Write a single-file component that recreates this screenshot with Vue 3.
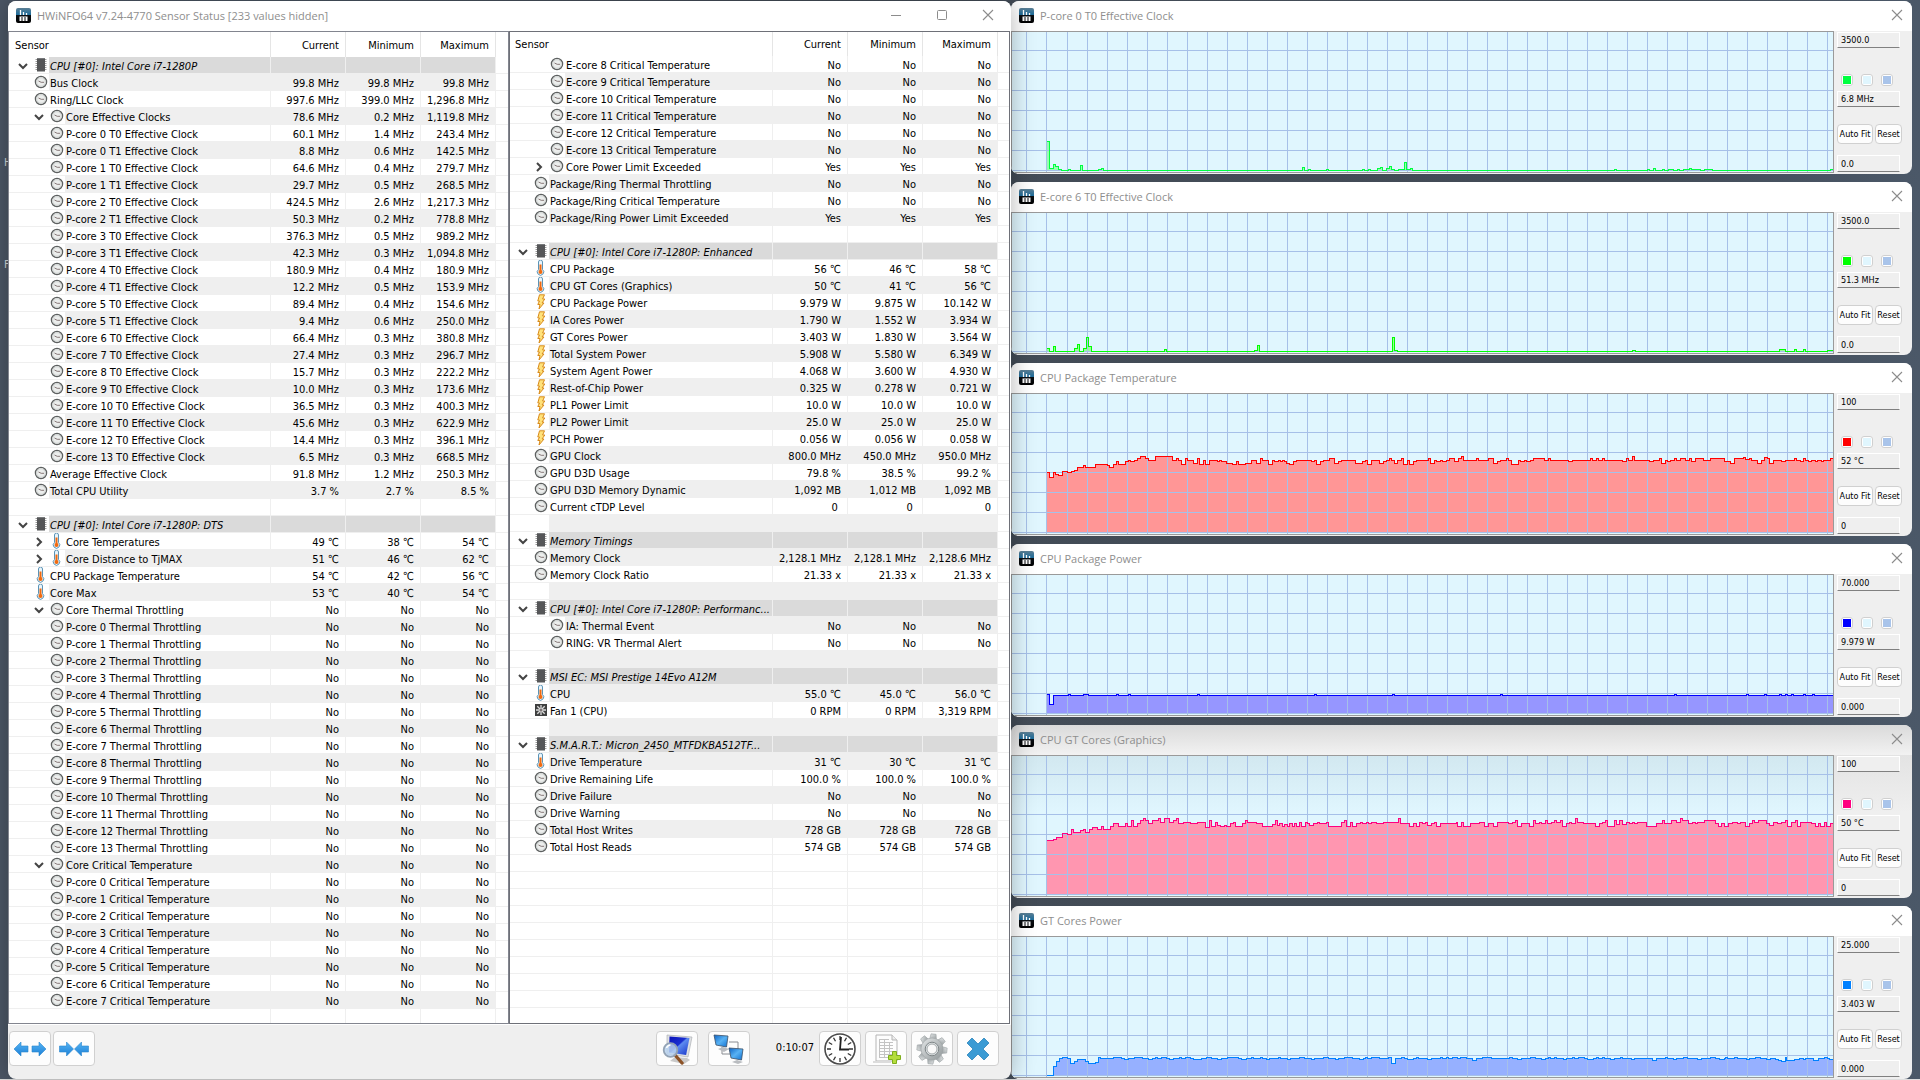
<script setup>
// Row format: kind + indent level | label | current | minimum | maximum
// kinds: h = group header, c = clock, t = temperature, p = power, f = fan
// a trailing v or > after the level marks an expanded or collapsed branch
const parse = (text) =>
  text.trim().split('\n').map((line) => {
    const [key, label = '', ...values] = line.trim().split('|')
    if (key === '-') return { kind: 'blank', level: 1, label: '', values: ['', '', ''] }
    return {
      kind: key[0],
      level: Number(key[1]),
      open: key[2] || '',
      label,
      values: values.length === 3 ? values : values.length === 1 ? [values[0], values[0], values[0]] : ['', '', '']
    }
  })

const filler = (n) => Array.from({ length: n }, () => ({ kind: 'empty', level: 1, label: '', values: ['', '', ''] }))

const leftRows = [
  ...parse(`
h1v|CPU [#0]: Intel Core i7-1280P
c1|Bus Clock|99.8 MHz
c1|Ring/LLC Clock|997.6 MHz|399.0 MHz|1,296.8 MHz
c2v|Core Effective Clocks|78.6 MHz|0.2 MHz|1,119.8 MHz
c2|P-core 0 T0 Effective Clock|60.1 MHz|1.4 MHz|243.4 MHz
c2|P-core 0 T1 Effective Clock|8.8 MHz|0.6 MHz|142.5 MHz
c2|P-core 1 T0 Effective Clock|64.6 MHz|0.4 MHz|279.7 MHz
c2|P-core 1 T1 Effective Clock|29.7 MHz|0.5 MHz|268.5 MHz
c2|P-core 2 T0 Effective Clock|424.5 MHz|2.6 MHz|1,217.3 MHz
c2|P-core 2 T1 Effective Clock|50.3 MHz|0.2 MHz|778.8 MHz
c2|P-core 3 T0 Effective Clock|376.3 MHz|0.5 MHz|989.2 MHz
c2|P-core 3 T1 Effective Clock|42.3 MHz|0.3 MHz|1,094.8 MHz
c2|P-core 4 T0 Effective Clock|180.9 MHz|0.4 MHz|180.9 MHz
c2|P-core 4 T1 Effective Clock|12.2 MHz|0.5 MHz|153.9 MHz
c2|P-core 5 T0 Effective Clock|89.4 MHz|0.4 MHz|154.6 MHz
c2|P-core 5 T1 Effective Clock|9.4 MHz|0.6 MHz|250.0 MHz
c2|E-core 6 T0 Effective Clock|66.4 MHz|0.3 MHz|380.8 MHz
c2|E-core 7 T0 Effective Clock|27.4 MHz|0.3 MHz|296.7 MHz
c2|E-core 8 T0 Effective Clock|15.7 MHz|0.3 MHz|222.2 MHz
c2|E-core 9 T0 Effective Clock|10.0 MHz|0.3 MHz|173.6 MHz
c2|E-core 10 T0 Effective Clock|36.5 MHz|0.3 MHz|400.3 MHz
c2|E-core 11 T0 Effective Clock|45.6 MHz|0.3 MHz|622.9 MHz
c2|E-core 12 T0 Effective Clock|14.4 MHz|0.3 MHz|396.1 MHz
c2|E-core 13 T0 Effective Clock|6.5 MHz|0.3 MHz|668.5 MHz
c1|Average Effective Clock|91.8 MHz|1.2 MHz|250.3 MHz
c1|Total CPU Utility|3.7 %|2.7 %|8.5 %
-
h1v|CPU [#0]: Intel Core i7-1280P: DTS
t2>|Core Temperatures|49 ℃|38 ℃|54 ℃
t2>|Core Distance to TjMAX|51 ℃|46 ℃|62 ℃
t1|CPU Package Temperature|54 ℃|42 ℃|56 ℃
t1|Core Max|53 ℃|40 ℃|54 ℃
c2v|Core Thermal Throttling|No
c2|P-core 0 Thermal Throttling|No
c2|P-core 1 Thermal Throttling|No
c2|P-core 2 Thermal Throttling|No
c2|P-core 3 Thermal Throttling|No
c2|P-core 4 Thermal Throttling|No
c2|P-core 5 Thermal Throttling|No
c2|E-core 6 Thermal Throttling|No
c2|E-core 7 Thermal Throttling|No
c2|E-core 8 Thermal Throttling|No
c2|E-core 9 Thermal Throttling|No
c2|E-core 10 Thermal Throttling|No
c2|E-core 11 Thermal Throttling|No
c2|E-core 12 Thermal Throttling|No
c2|E-core 13 Thermal Throttling|No
c2v|Core Critical Temperature|No
c2|P-core 0 Critical Temperature|No
c2|P-core 1 Critical Temperature|No
c2|P-core 2 Critical Temperature|No
c2|P-core 3 Critical Temperature|No
c2|P-core 4 Critical Temperature|No
c2|P-core 5 Critical Temperature|No
c2|E-core 6 Critical Temperature|No
c2|E-core 7 Critical Temperature|No`),
  ...filler(1)
]

const rightRows = [
  ...parse(`
c2|E-core 8 Critical Temperature|No
c2|E-core 9 Critical Temperature|No
c2|E-core 10 Critical Temperature|No
c2|E-core 11 Critical Temperature|No
c2|E-core 12 Critical Temperature|No
c2|E-core 13 Critical Temperature|No
c2>|Core Power Limit Exceeded|Yes
c1|Package/Ring Thermal Throttling|No
c1|Package/Ring Critical Temperature|No
c1|Package/Ring Power Limit Exceeded|Yes
-
h1v|CPU [#0]: Intel Core i7-1280P: Enhanced
t1|CPU Package|56 ℃|46 ℃|58 ℃
t1|CPU GT Cores (Graphics)|50 ℃|41 ℃|56 ℃
p1|CPU Package Power|9.979 W|9.875 W|10.142 W
p1|IA Cores Power|1.790 W|1.552 W|3.934 W
p1|GT Cores Power|3.403 W|1.830 W|3.564 W
p1|Total System Power|5.908 W|5.580 W|6.349 W
p1|System Agent Power|4.068 W|3.600 W|4.930 W
p1|Rest-of-Chip Power|0.325 W|0.278 W|0.721 W
p1|PL1 Power Limit|10.0 W|10.0 W|10.0 W
p1|PL2 Power Limit|25.0 W|25.0 W|25.0 W
p1|PCH Power|0.056 W|0.056 W|0.058 W
c1|GPU Clock|800.0 MHz|450.0 MHz|950.0 MHz
c1|GPU D3D Usage|79.8 %|38.5 %|99.2 %
c1|GPU D3D Memory Dynamic|1,092 MB|1,012 MB|1,092 MB
c1|Current cTDP Level|0\u00a0|0\u00a0|0\u00a0
-
h1v|Memory Timings
c1|Memory Clock|2,128.1 MHz|2,128.1 MHz|2,128.6 MHz
c1|Memory Clock Ratio|21.33 x
-
h1v|CPU [#0]: Intel Core i7-1280P: Performanc...
c2|IA: Thermal Event|No
c2|RING: VR Thermal Alert|No
-
h1v|MSI EC: MSI Prestige 14Evo A12M
t1|CPU|55.0 ℃|45.0 ℃|56.0 ℃
f1|Fan 1 (CPU)|0 RPM|0 RPM|3,319 RPM
-
h1v|S.M.A.R.T.: Micron_2450_MTFDKBA512TF...
t1|Drive Temperature|31 ℃|30 ℃|31 ℃
c1|Drive Remaining Life|100.0 %
c1|Drive Failure|No
c1|Drive Warning|No
c1|Total Host Writes|728 GB
c1|Total Host Reads|574 GB`),
  ...filler(10)
]

const panels = [
  { id: 'left', rows: leftRows },
  { id: 'right', rows: rightRows }
]

const iconOf = { h: 'i-chip', c: 'i-clock', t: 'i-temp', p: 'i-power', f: 'i-fan' }

// Graph traces as "x:y" breakpoints of a step line, in plot pixels
const graphs = [
  {
    title: 'P-core 0 T0 Effective Clock', max: '3500.0', now: '6.8 MHz', min: '0.0',
    line: '#00ff40', fill: '#96ffb0',
    trace: '35:109 37:136 41:132 43:134 46:137 49:138 56:137 58:138 68:133 70:138 86:137 89:136 91:138 290:135 292:138 296:137 298:138 314:137 316:138 350:137 352:138 356:137 358:138 365:136 368:135 370:138 374:136 377:134 379:137 382:138 386:137 392:130 394:137 398:136 400:138 602:137 604:138 635:137 637:138 641:136 643:138 650:137 652:138 656:137 661:138 665:137 667:138 671:137 677:136 679:137 688:138 692:137 700:138 818:137'
  },
  {
    title: 'E-core 6 T0 Effective Clock', max: '3500.0', now: '51.3 MHz', min: '0.0',
    line: '#00ff00', fill: '#96ff96',
    trace: '35:135 37:138 41:133 43:138 62:135 65:131 67:138 71:135 74:124 76:133 79:138 152:136 154:138 242:137 245:132 247:138 380:124 382:137 385:138 620:137 623:138 767:136 773:138 782:136 784:138 791:136 793:138 815:137'
  },
  {
    title: 'CPU Package Temperature', max: '100', now: '52 °C', min: '0',
    line: '#ff0000', fill: '#ff9696',
    trace: '35:78 37:83 41:78 43:80 46:81 50:77 55:78 59:77 62:76 65:73 71:71 73:73 83:70 95:71 97:73 101:70 104:67 106:70 113:67 116:66 118:67 122:66 125:64 128:62 133:64 136:66 143:62 160:66 164:64 166:66 169:70 173:64 175:66 181:69 185:64 187:70 191:66 193:70 197:66 205:67 207:66 209:67 214:69 220:70 224:67 226:70 233:69 239:66 244:69 248:64 250:66 256:70 260:66 262:67 266:66 268:67 270:66 272:67 274:69 277:70 281:67 284:66 299:67 302:66 304:70 308:67 311:66 317:64 322:69 326:67 329:66 343:69 350:67 353:66 355:70 359:66 367:69 371:67 374:66 377:64 379:66 382:69 385:66 389:64 391:70 395:66 397:70 401:67 404:66 416:64 418:69 422:66 424:67 428:66 430:67 434:66 437:64 442:67 446:64 449:62 451:66 464:64 466:66 476:64 481:69 485:67 488:66 494:64 496:66 499:70 506:66 508:67 512:66 514:67 518:66 521:64 532:66 536:64 538:66 556:67 560:66 578:64 580:66 584:64 586:66 590:64 592:66 610:67 614:64 616:66 620:62 622:66 637:67 641:66 647:64 649:69 653:66 655:67 658:66 662:64 664:66 668:64 673:66 677:64 679:67 683:64 691:66 698:64 712:67 718:69 722:64 731:63 733:65 737:64 739:66 745:69 749:66 752:63 755:64 757:69 761:66 769:67 773:66 782:64 784:66 788:67 791:64 793:66 796:67 799:66 803:67 805:66 809:67 811:66 818:64'
  },
  {
    title: 'CPU Package Power', max: '70.000', now: '9.979 W', min: '0.000',
    line: '#0000ff', fill: '#9696ff',
    trace: '35:119 37:129 41:120 56:119 58:120 71:119 76:120 104:119 106:120 116:119 118:120 185:119 187:120 302:119 304:120 380:119 382:120 488:119 490:120 662:119 664:120 734:119 736:120 752:119 754:120 767:119 769:120 773:119 775:120 779:119 781:120 791:119 793:120 800:119 802:120'
  },
  {
    title: 'CPU GT Cores (Graphics)', max: '100', now: '50 °C', min: '0', shaded: true,
    line: '#ff0080', fill: '#ff96b0',
    trace: '35:84 41:83 44:81 50:77 55:78 59:73 61:76 68:74 71:73 73:76 77:73 80:71 85:73 89:70 91:73 98:70 101:67 106:70 113:67 115:70 119:64 121:70 125:67 128:64 131:62 133:64 136:67 140:64 146:62 148:66 152:62 157:66 161:64 164:62 166:67 171:66 178:67 185:66 193:71 197:64 199:70 203:66 205:69 208:70 212:69 214:70 218:67 221:66 223:70 230:67 233:64 235:66 244:67 250:70 260:68 263:64 265:69 267:67 270:70 272:68 275:70 277:67 280:70 282:67 284:70 287:66 289:70 293:66 295:67 297:69 301:67 305:66 307:67 314:66 316:70 329:66 332:64 334:70 338:66 340:70 344:67 348:66 350:67 354:66 356:67 359:66 364:67 371:66 386:62 388:67 397:70 401:67 404:70 407:66 410:67 413:66 415:69 419:67 422:66 424:70 428:67 444:66 445:70 449:66 451:70 458:67 467:66 472:70 476:67 481:70 485:66 491:66 496:67 500:66 503:64 505:70 509:67 517:70 521:64 523:67 527:66 529:67 533:64 535:67 539:66 542:64 544:66 548:64 550:70 554:67 557:66 559:67 563:62 565:66 571:67 583:70 587:67 590:66 593:64 595:70 602:64 604:68 607:64 610:68 614:66 617:67 620:66 622:67 625:66 634:70 644:67 650:64 652:67 659:64 664:66 668:62 670:64 676:67 680:66 683:67 685:66 692:64 703:67 706:70 709:67 712:70 716:67 720:66 725:67 728:66 733:70 737:67 740:64 742:66 746:64 754:67 757:69 761:66 765:67 769:66 773:64 775:70 779:66 783:64 785:70 788:66 799:67 803:70 806:67 808:70 812:66 814:70 818:67'
  },
  {
    title: 'GT Cores Power', max: '25.000', now: '3.403 W', min: '0.000',
    line: '#0080ff', fill: '#96b0ff',
    trace: '35:138 41:129 44:124 47:121 50:120 55:121 58:126 62:124 65:122 73:124 76:126 83:125 86:120 88:121 101:120 109:121 112:122 116:121 122:120 130:121 136:122 140:121 143:120 145:121 149:120 154:121 157:122 161:121 167:120 169:121 173:120 178:121 181:122 189:121 194:120 199:121 205:122 209:121 215:120 226:121 229:122 234:121 239:120 241:121 248:120 250:121 254:122 257:121 266:120 268:121 275:122 278:121 287:120 292:121 299:122 302:121 311:120 316:121 323:122 326:121 332:120 340:121 347:122 351:121 353:120 355:121 359:120 367:121 376:120 379:126 383:121 389:120 392:121 395:122 401:121 404:120 406:121 415:122 419:121 428:120 430:121 434:120 436:121 440:120 445:121 448:120 454:121 460:123 464:121 470:120 479:121 497:120 500:121 505:122 509:121 518:120 523:121 529:122 533:121 536:120 538:121 542:120 544:121 551:122 554:121 560:120 562:121 566:120 572:121 575:122 581:121 584:120 586:121 590:120 592:121 598:122 602:121 608:120 610:121 619:122 622:121 640:123 644:121 653:120 655:121 661:122 664:121 671:120 675:121 685:122 689:121 698:120 703:121 707:122 712:121 713:120 715:121 722:120 725:121 734:122 737:121 743:120 748:121 754:122 758:121 763:122 766:123 769:124 773:120 774:123 782:122 787:121 791:122 793:121 801:123 806:121 812:120 815:121 817:122'
  }
].map((g) => {
  const pts = g.trace.split(' ').map((p) => p.split(':').map(Number))
  let d = `M${pts[0][0]} ${pts[0][1] + 0.5}`
  pts.slice(1).forEach(([x, y]) => { d += `H${x + 0.5}V${y + 0.5}` })
  d += 'H821'
  return { ...g, d, area: `${d}V139H${pts[0][0]}Z` }
})

const gridX = [14, 34, ...Array.from({ length: 39 }, (_, i) => 55 + i * 20)]
const gridY = Array.from({ length: 7 }, (_, i) => 18 + i * 20)
const ticks = Array.from({ length: 12 }, (_, i) => i * 30)
const teeth = Array.from({ length: 8 }, (_, i) => i * 45)
</script>

<template>
  <svg class="defs" aria-hidden="true">
    <defs>
      <linearGradient id="g-app" x1="0" y1="0" x2="0" y2="1">
        <stop offset="0" stop-color="#5c7f94" /><stop offset=".45" stop-color="#1d6d9c" />
        <stop offset=".5" stop-color="#0a0f14" /><stop offset="1" stop-color="#000" />
      </linearGradient>
      <linearGradient id="g-arrow" x1="0" y1="0" x2="0" y2="1">
        <stop offset="0" stop-color="#54b4f4" /><stop offset="1" stop-color="#1c7fd6" />
      </linearGradient>
      <linearGradient id="g-screen" x1="0" y1="0" x2="1" y2="1">
        <stop offset="0" stop-color="#0b12b8" /><stop offset=".45" stop-color="#1a2fd0" />
        <stop offset=".5" stop-color="#5e8cf0" /><stop offset="1" stop-color="#1430c8" />
      </linearGradient>
      <linearGradient id="g-net" x1="0" y1="0" x2="1" y2="1">
        <stop offset="0" stop-color="#0c62c4" /><stop offset=".5" stop-color="#58b2f4" /><stop offset="1" stop-color="#0f6fd0" />
      </linearGradient>
      <linearGradient id="g-gear" x1="0" y1="0" x2="1" y2="1">
        <stop offset="0" stop-color="#e4e7e8" /><stop offset="1" stop-color="#8f9698" />
      </linearGradient>
    </defs>
    <symbol id="i-app" viewBox="0 0 15 15">
      <rect width="15" height="15" rx="2" fill="url(#g-app)" />
      <path d="M4.500 2v5M7.500 4v3M10.500 5v2" stroke="#fff" stroke-width="1.300" />
      <path d="M4.500 9v4M7.500 9v4M10.500 9v4" stroke="#fff" stroke-width="2" />
      <path d="M3.500 8.500h8" stroke="#fff" stroke-opacity=".5" />
    </symbol>
    <symbol id="i-clock" viewBox="0 0 14 14">
      <circle cx="7" cy="7" r="5.6" fill="#eceeed" stroke="#5d6060" stroke-width="1.3" />
      <circle cx="7" cy="7" r="4.3" fill="none" stroke="#cfd3d2" />
      <path d="M4.500 6 7.200 7.300H10" fill="none" stroke="#7b6a6a" stroke-width=".9" />
    </symbol>
    <symbol id="i-chip" viewBox="0 0 14 14">
      <path d="M1.500 1.500H12.500M1.500 3.500H12.500M1.500 5.500H12.500M1.500 7.500H12.500M1.500 9.500H12.500M1.500 11.500H12.500" stroke="#9a9a9a" />
      <rect x="3" width="8" height="13.500" fill="#555658" />
      <rect x="3" width="8" height="1" fill="#77797b" />
    </symbol>
    <symbol id="i-temp" viewBox="0 0 14 16">
      <path d="M4.500 2a2 2 0 0 1 4 0v7.500a3.200 3.200 0 1 1-4 0z" fill="#e8f4fb" stroke="#5b93b5" />
      <path d="M6.500 4.500v8" stroke="#f06a10" stroke-width="2" />
      <circle cx="6.500" cy="12" r="2" fill="#f06a10" />
    </symbol>
    <symbol id="i-power" viewBox="0 0 14 16">
      <path d="M5.500.8h5L8.600 5h2.200L8 9h2l-5 6 1-4.500H3.800L5.500 7H3.800z" fill="#ffe27a" stroke="#d88a1c" />
    </symbol>
    <symbol id="i-fan" viewBox="0 0 14 14">
      <rect x="1" y="1" width="12" height="12" fill="#3f4040" />
      <path d="M7 2v10M2 7h10M3.300 3.300l7.400 7.400M10.700 3.300l-7.400 7.400" stroke="#dcdcdc" stroke-width="1.300" />
      <circle cx="7" cy="7" r="1.500" fill="#7a7272" />
    </symbol>
    <symbol id="i-close" viewBox="0 0 12 12">
      <path d="M1 1l10 10M11 1 1 11" fill="none" stroke="#8c8c8c" stroke-width="1.100" />
    </symbol>
  </svg>

  <div class="desktop">
    <span class="shortcut one">H</span>
    <span class="shortcut two">F</span>

    <main class="window sensors">
      <header class="titlebar">
        <svg class="app-icon"><use href="#i-app" /></svg>
        <h1>HWiNFO64 v7.24-4770 Sensor Status [233 values hidden]</h1>
        <div class="controls">
          <button aria-label="Minimize"><svg width="12" height="12"><path d="M1 6.500h10" stroke="#8c8c8c" /></svg></button>
          <button aria-label="Maximize"><svg width="12" height="12"><rect x="1.500" y="1.500" width="9" height="9" rx="1" fill="none" stroke="#8c8c8c" /></svg></button>
          <button aria-label="Close"><svg width="12" height="12"><use href="#i-close" /></svg></button>
        </div>
      </header>

      <div class="panels">
        <section v-for="panel in panels" :key="panel.id" class="panel" :class="panel.id">
          <table>
            <colgroup><col /><col class="num" /><col class="num" /><col class="num" /><col class="rest" /></colgroup>
            <thead>
              <tr><th class="name">Sensor</th><th>Current</th><th>Minimum</th><th>Maximum</th><th class="rest"></th></tr>
            </thead>
            <tbody>
              <tr v-for="(row, i) in panel.rows" :key="i" :class="{ group: row.kind === 'h', alt: i % 2 === 1 && row.kind !== 'empty' }">
                <td class="name">
                  <div class="tree" :class="'level' + row.level">
                    <span class="twist">
                      <svg v-if="row.open === 'v'" width="10" height="10"><path d="M1 3l4 4 4-4" fill="none" stroke="#444" stroke-width="2" /></svg>
                      <svg v-else-if="row.open === '>'" width="10" height="10"><path d="M3 1l4 4-4 4" fill="none" stroke="#444" stroke-width="2" /></svg>
                    </span>
                    <span class="icon"><svg v-if="iconOf[row.kind]"><use :href="'#' + iconOf[row.kind]" /></svg></span>
                    <span class="label">{{ row.label }}</span>
                  </div>
                </td>
                <td v-for="(value, n) in row.values" :key="n" class="value">{{ value }}</td>
                <td class="rest"></td>
              </tr>
            </tbody>
          </table>
        </section>
      </div>

      <footer class="toolbar">
        <div class="pair">
          <button aria-label="Expand columns">
            <svg width="34" height="20" viewBox="0 0 34 20"><g fill="url(#g-arrow)" stroke="#2a86cf" stroke-width=".6"><path d="M1 10l7-7v4h7v6H8v4zM33 10l-7-7v4h-7v6h7v4z" /></g></svg>
          </button>
          <button aria-label="Shrink columns">
            <svg width="34" height="20" viewBox="0 0 34 20"><g fill="url(#g-arrow)" stroke="#2a86cf" stroke-width=".6"><path d="M16.500 10l-7-7v4h-7v6h7v4zM17.500 10l7-7v4h7v6h-7v4z" /></g></svg>
          </button>
        </div>
        <div class="spacer"></div>
        <button aria-label="System summary">
          <svg width="32" height="32" viewBox="0 0 32 32">
            <path d="M9 28l5-4 12 1 3 2-6 4z" fill="#c9c9c9" />
            <path d="M6 2l25 2-4 20-21-3z" fill="#dfe1e4" stroke="#a5a8ad" stroke-width=".6" />
            <path d="M8.500 3.500l20 1.600-3.400 17L8 19.500z" fill="url(#g-screen)" />
            <path d="M14 22l7 8" stroke="#8c5226" stroke-width="3.400" stroke-linecap="round" />
            <circle cx="9.500" cy="17" r="6.800" fill="#b8d2ee" fill-opacity=".85" stroke="#93a3b5" stroke-width="1.800" />
            <path d="M5.500 15a4.500 4.500 0 0 1 4-3" fill="none" stroke="#fff" stroke-width="1.400" />
          </svg>
        </button>
        <button class="network" aria-label="Remote monitoring">
          <svg width="34" height="32" viewBox="0 0 34 32">
            <path d="M17 9h9v7M10 14v7h8" fill="none" stroke="#8a8d92" />
            <path d="M6 16l5-2 6 2-5 3z" fill="#b9bcc0" />
            <path d="M2 2l14 1-1.500 11L4 12z" fill="url(#g-net)" stroke="#3c4f66" stroke-width=".8" />
            <path d="M20 29l5-2 6 2-5 2z" fill="#b9bcc0" />
            <path d="M17 15l14 1-1.500 11L19 25z" fill="url(#g-net)" stroke="#3c4f66" stroke-width=".8" />
          </svg>
        </button>
        <time>0:10:07</time>
        <button aria-label="Reset clock">
          <svg width="34" height="34" viewBox="0 0 34 34">
            <circle cx="17" cy="17" r="15" fill="#fff" stroke="#4a4a4a" stroke-width="1.600" />
            <path v-for="a in ticks" :key="a" d="M17 4v4" :transform="`rotate(${a} 17 17)`" stroke="#333" stroke-width="1.300" />
            <path d="M18 5l-1 12.500h9" fill="none" stroke="#222" stroke-width="1.800" />
          </svg>
        </button>
        <button aria-label="Start logging">
          <svg width="32" height="32" viewBox="0 0 32 32">
            <path d="M6 2h16l5 5v21H6z" fill="#fdfdfd" stroke="#b5b5b5" />
            <path d="M22 2v5h5" fill="#eee" stroke="#b5b5b5" />
            <path d="M9 6.500h10M9 9.500h14M9 12.500h14M9 15.500h14M9 18.500h14M9 21.500h14M9 24.500h14M9.500 6v19M14.500 6v19M19.500 9v16" stroke="#c3c3c3" fill="none" />
            <path d="M3 29h18" stroke="#dcdcdc" stroke-width="2" />
            <path d="M22.500 18.500h4v4h4v4h-4v4h-4v-4h-4v-4h4z" fill="#b4dd3c" stroke="#7fae1c" />
          </svg>
        </button>
        <button aria-label="Configure sensors">
          <svg width="32" height="32" viewBox="0 0 32 32">
            <g fill="url(#g-gear)" stroke="#9da3a5" stroke-width=".6">
              <path v-for="a in teeth" :key="a" d="M12.500 7l1-6h5l1 6z" :transform="`rotate(${a + 6} 16 16)`" />
              <circle cx="16" cy="16" r="11" />
            </g>
            <circle cx="16" cy="16" r="6.800" fill="#dde1e2" stroke="#7f8688" />
            <circle cx="16" cy="16" r="5" fill="#fafafa" stroke="#a3a9ab" />
          </svg>
        </button>
        <button aria-label="Close sensors">
          <svg width="26" height="26" viewBox="0 0 26 26"><path d="M7 2l6 6 6-6 5 5-6 6 6 6-5 5-6-6-6 6-5-5 6-6-6-6z" fill="#3b9bd4" stroke="#2b84bb" stroke-width=".8" /></svg>
        </button>
      </footer>
    </main>

    <div class="graphs">
      <section v-for="g in graphs" :key="g.title" class="window graph" :class="{ shaded: g.shaded }">
        <header class="titlebar">
          <svg class="app-icon"><use href="#i-app" /></svg>
          <h2>{{ g.title }}</h2>
          <div class="controls"><button aria-label="Close"><svg width="12" height="12"><use href="#i-close" /></svg></button></div>
        </header>
        <div class="content">
          <svg class="plot" viewBox="0 0 821 140" preserveAspectRatio="none" role="img" :aria-label="g.title">
            <path :d="g.area" :fill="g.fill" shape-rendering="crispEdges" />
            <g fill="#a6c0e8">
              <rect v-for="x in gridX" :key="'x' + x" :x="x" y="0" width="1" height="140" />
              <rect v-for="y in gridY" :key="'y' + y" x="0" :y="y" width="821" height="1" />
            </g>
            <path :d="g.d" fill="none" :stroke="g.line" shape-rendering="crispEdges" />
          </svg>
          <aside class="side">
            <input class="max" :value="g.max" aria-label="Scale maximum" />
            <div class="swatches">
              <button aria-label="Line colour"><i :style="{ background: g.line }"></i></button>
              <button aria-label="Background colour"><i class="back"></i></button>
              <button aria-label="Grid colour"><i class="grid"></i></button>
            </div>
            <input class="now" :value="g.now" aria-label="Current value" readonly />
            <div class="actions"><button class="fit">Auto Fit</button><button class="reset">Reset</button></div>
            <input class="min" :value="g.min" aria-label="Scale minimum" />
          </aside>
        </div>
      </section>
    </div>
  </div>
</template>

<style>
body { background: #444e5a; }
</style>

<style scoped>
* { box-sizing: border-box; }
.defs { position: absolute; width: 0; height: 0; }
.desktop {
  position: relative;
  display: grid;
  grid-template-columns: minmax(0, 1003fr) minmax(0, 901fr);
  min-height: 100vh;
  padding: 1px 8px 0;
  border-bottom: 1px solid #dedede;
  background: linear-gradient(90deg, #4c5766, #434c57 40%, #424b56 85%, #4b5868);
  font-family: "DejaVu Sans Condensed", "DejaVu Sans", sans-serif;
  font-size: 11px;
  color: #000;
}
.shortcut { position: absolute; left: 4px; color: #d5d8dc; }
.one { top: 156px; }
.two { top: 258px; }
button { padding: 0; border: 0; background: none; font: inherit; color: inherit; }
.window { display: flex; flex-direction: column; background: #efefef; border-radius: 8px; overflow: hidden; }
.titlebar { display: flex; align-items: center; height: 30px; flex: none; padding: 0 17px 2px 8px; background: #fff; }
.titlebar h1, .titlebar h2 {
  flex: 1; margin: 0; font: 11px "Open Sans", "Noto Sans", sans-serif; color: #8e8e8e; white-space: nowrap;
}
.app-icon { width: 15px; height: 15px; margin-right: 6px; }
.controls { display: flex; gap: 34px; }
.controls button, .controls svg { display: block; width: 12px; height: 12px; }

.sensors { position: relative; z-index: 1; box-shadow: 0 0 24px rgba(0, 0, 0, .3); }
.panels { display: flex; flex: 1; min-height: 0; padding-right: 1px; background: #fff; }
.panel { flex: 1; min-width: 0; height: 993px; border: 1px solid #6e7078; overflow: hidden; background: #fff; }
.panel.left { border-color: #82858f; }
table { width: 100%; table-layout: fixed; border-collapse: separate; border-spacing: 0; }
col.num { width: 75px; }
col.rest { width: 12px; }
.right col.rest { width: 11px; }
th {
  height: 25px; padding: 2px 6px 0 0; border-right: 1px solid #e5e5e5;
  font-weight: 400; text-align: right; line-height: 16px;
}
.right th { height: 24px; padding-top: 1px; }
th.name { padding-left: 6px; text-align: left; }
.right th.name { padding-left: 5px; }
th.rest, td.rest { border-right: 0; }
td { height: 17px; padding: 0; border-right: 1px solid #efefef; border-bottom: 1px solid #efefef; line-height: 13px; }
td.value { padding: 3px 6px 0 0; text-align: right; white-space: nowrap; }
.tree { display: flex; height: 16px; padding-left: 9px; }
.level2 { padding-left: 25px; }
.right .tree { padding-left: 8px; }
.right .level2 { padding-left: 24px; }
.twist { width: 17px; padding-top: 4px; }
.twist svg, .icon svg { display: block; }
.icon { width: 14px; }
.icon svg { width: 14px; height: 16px; margin-left: -1px; }
.label { flex: 1; padding: 3px 0 0 1px; white-space: nowrap; }
.alt .label, .alt .value { background: #efefef; }
.group .label, .group .value { background: #dadada; }
.group .label { font-style: italic; }

.toolbar { display: flex; align-items: flex-start; gap: 4px; height: 54px; padding: 6px 12px 0 1px; }
.toolbar button {
  display: flex; align-items: center; justify-content: center; width: 42px; height: 35px;
  border: 1px solid #d0d0d0; border-radius: 4px; background: #fdfdfd;
}
.pair { display: flex; gap: 2px; }
.spacer { flex: 1; }
.network { margin-left: 6px; }
time { width: 61px; line-height: 34px; text-align: right; padding-right: 1px; }

.graphs { display: flex; flex-direction: column; gap: 8px; }
.graph { height: 173px; }
.graph .titlebar { padding-right: 9px; }
.graph .content { display: flex; height: 142px; }
.plot { flex: 1; min-width: 0; height: 142px; border: 1px solid #9a9a9a; background: #e0f6fe; }
.side { display: flex; flex-direction: column; width: 78px; padding: 1px 0 0 3px; font-size: 9px; }
.side input {
  width: 63px; height: 16px; padding: 0 3px; border: 1px solid #fff; border-bottom-color: #808080;
  background: #efefef; font: inherit; color: #000;
}
.side .min { height: 17px; }
.swatches { display: flex; gap: 8px; height: 12px; margin: 26px 0 5px 4px; }
.swatches button { width: 12px; height: 12px; padding: 1px; border: 1px solid #d0d0d0; border-radius: 3px; background: #fff; }
.swatches i { display: block; height: 8px; }
.back { background: #e0f6fe; }
.grid { background: #a9c4ea; }
.actions { display: flex; gap: 2px; margin: 17px 0 11px; }
.actions button { height: 20px; border: 1px solid #d0d0d0; border-radius: 4px; background: #fdfdfd; white-space: nowrap; overflow: hidden; }
.fit { width: 36px; }
.reset { width: 27px; }
.shaded .titlebar { background: linear-gradient(#dadada, #f2f2f2); }
.shaded .plot { background: linear-gradient(#d2e8f0, #e0f6fe 40%); }
.shaded .side { background: linear-gradient(#e3e3e3, #efefef 40%); }
</style>
